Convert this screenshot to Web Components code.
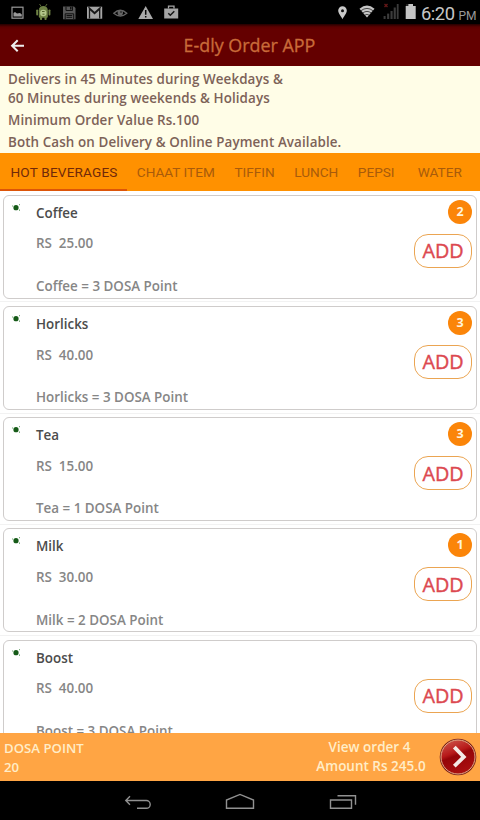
<!DOCTYPE html>
<html lang="en">
<head>
<meta charset="utf-8">
<title>E-dly Order APP</title>
<style>
html,body{margin:0;padding:0;width:480px;height:820px;overflow:hidden;background:#fff}
body{font-family:"Open Sans","Noto Sans",sans-serif}
</style>
</head>
<body>
<edly-app></edly-app>
<script>
function define(name, html, setup) {
  const template = document.createElement('template');
  template.innerHTML = html;
  customElements.define(name, class extends HTMLElement {
    connectedCallback() {
      if (this.shadowRoot) return;
      const root = this.attachShadow({ mode: 'open' });
      root.append(template.content.cloneNode(true));
      if (setup) setup(this, root);
    }
  });
}

define('status-bar', `
<style>
:host{display:flex;height:24px;background:#000;font-family:Roboto,sans-serif;color:#c6c6c6;justify-content:space-between}
svg{display:block;width:190px;height:24px}
.right{display:flex}
.right svg{width:97px}
.time{box-sizing:border-box;font-size:18.4px;line-height:27px;width:63px;white-space:nowrap;padding-left:4px;letter-spacing:-.5px}
small{font-size:12px;margin-left:4px;letter-spacing:0;color:#999}
</style>
<svg viewBox="0 0 190 24">
  <g fill="none" stroke="#999" stroke-width="1.2"><rect x="12" y="7.2" width="11" height="11"/></g>
  <path d="M13.5 15.5V13L15 12l2 1.6 3-.6 1.8 1.5V16.5H13.5Z" fill="#999"/>
  <g fill="#6f8345"><path d="M38.8 9.3a4.7 4.7 0 0 1 9 0Z"/><rect x="38.8" y="9" width="9" height="8.7" rx="1"/><rect x="36.2" y="9.4" width="1.9" height="6" rx=".9"/><rect x="48.5" y="9.4" width="1.9" height="6" rx=".9"/><rect x="40" y="16.5" width="2.1" height="3.5" rx=".8"/><rect x="44.5" y="16.5" width="2.1" height="3.5" rx=".8"/><path d="M39.5 4 41 6.2M47 4 45.5 6.2" stroke="#6f8345" stroke-width=".8"/></g>
  <circle cx="43.3" cy="13" r="3.2" fill="#b4c78b"/><path d="M42 11.5h2.6M42.5 14.2h2" stroke="#55652f" stroke-width="1"/>
  <path d="M63 6.5h11l1.5 1.5v11.2H63Z" fill="#575757"/><path d="M66 6.5v4h6.5v-4M65.2 19v-5.2h8.5V19M66.5 15.5h5.7M66.5 17.3h5.7" fill="none" stroke="#111" stroke-width="1"/><rect x="70" y="7" width="1.5" height="2.5" fill="#111"/>
  <rect x="87" y="6.7" width="15.2" height="12" fill="#a5a5a5"/><path d="M89.5 18.5V9l5.1 4.7L99.7 9v9.5M88.5 7.2l6.1 5.5 6.1-5.5" fill="none" stroke="#181818" stroke-width="1.3"/>
  <path d="M113.8 13.2q6.5-6 13 0q-6.5 5.6-13 0Z" fill="none" stroke="#656565" stroke-width="1.3"/><circle cx="120.3" cy="12.7" r="2.7" fill="#656565"/><circle cx="121" cy="12" r=".8" fill="#111"/>
  <path d="M145.7 6 153 19H138.3Z" fill="#a9a9a9"/><path d="M145.7 10v4.8M145.7 16v1.6" stroke="#050505" stroke-width="1.5"/>
  <path d="M164.2 8.5h14v10h-14Z" fill="#a5a5a5"/><path d="M168.5 8.5V6.2h5.5v2.3" fill="none" stroke="#a5a5a5" stroke-width="1.3"/><path d="m168.3 13.3 2 2 4-4" fill="none" stroke="#161616" stroke-width="1.5"/>
</svg>
<div class="right">
<svg viewBox="320 0 97 24">
  <path d="M342.5 19.2c-1-2.4-4.3-5.4-4.3-8.6a4.3 4.3 0 0 1 8.6 0c0 3.2-3.3 6.2-4.3 8.6Z" fill="#c9c9c9"/><circle cx="342.5" cy="10.7" r="1.5" fill="#111"/>
  <path d="M359.5 8.7q7.5-6.3 15 0L367 17.4Z" fill="#c6c6c6"/><path d="M360.8 10.8q6.2-4.8 12.4 0M362.8 13q4.2-3.2 8.4 0M364.8 15.2q2.2-1.7 4.4 0" fill="none" stroke="#111" stroke-width=".7"/>
  <g fill="#3c3c3c"><rect x="383.6" y="16" width="2" height="3"/><rect x="387.1" y="13.6" width="2.1" height="5.4"/><rect x="390.5" y="11" width="2.1" height="8"/><rect x="393.7" y="7.5" width="2.1" height="11.5"/><rect x="396.8" y="4" width="1.8" height="15"/></g>
  <path d="m384.5 4 3 3m0-3-3 3" stroke="#651818" stroke-width="1.3"/>
  <path d="M405.7 6h2.4V4h4.9v2h2.7v12.9h-10Z" fill="#c4c4c4"/><path d="M406 4h2.3v2H406Z" fill="#222"/>
</svg>
<div class="time">6:20<small>PM</small></div>
</div>`);

define('app-header', `
<style>
:host{display:grid;grid-template-columns:1fr auto 1fr;align-items:center;height:41.5px;background:linear-gradient(#220000,#5a0000 7%,#640000 14%,#640000);color:#c96b39}
svg{width:36px;height:40px;display:block}
h1{margin:1px 0 0 19px;font-size:17.9px;line-height:24px;font-weight:500;-webkit-text-stroke:.3px}
</style>
<svg viewBox="0 24 36 40"><path d="M24 44.7H12.4M17.7 39.2 12.1 44.7l5.6 5.5" fill="none" stroke="#eee" stroke-width="2"/></svg>
<h1><slot></slot></h1><span></span>`);

define('delivery-notice', `
<style>
:host{display:block;box-sizing:border-box;height:87.5px;background:#fffde7;padding:4px 8px 0;color:#7d6258;font-size:13.4px;letter-spacing:.1px;font-weight:600;line-height:19px;white-space:nowrap}
p{margin:0 0 3.2px}
</style>
<p>Delivers in 45 Minutes during Weekdays &amp;<br>60 Minutes during weekends &amp; Holidays</p>
<p>Minimum Order Value Rs.100</p>
<p>Both Cash on Delivery &amp; Online Payment Available.</p>`);

define('menu-tab', `
<style>
:host{display:block;box-sizing:border-box;height:38px;font:400 13.6px/39px Roboto,sans-serif;color:#a85b0b;white-space:nowrap;padding:0 9.8px}
:host([active]){width:127px;padding-left:10.5px;color:#70290a;letter-spacing:.17px;border-bottom:2px solid #dd5509}
:host(:last-child){padding-left:13.5px}
</style><slot></slot>`);

define('menu-tabs', `
<style>:host{display:flex;height:38px;background:#ff9100}</style><slot></slot>`);

define('menu-item', `
<style>
:host{display:block;box-sizing:border-box;height:111.3px;padding:3.5px 3px 0;border-bottom:1px solid #f2f2f2}
.card{display:grid;grid-template-columns:32px 1fr 58px;box-sizing:border-box;height:104px;border:1.5px solid #cfcccb;border-radius:6px;background:#fff;padding-right:4px}
svg{width:20px;height:24px}
.info{font-size:13.4px;font-weight:600;line-height:18px;color:#868686;white-space:pre}
h2{font-size:13.4px;line-height:18px;font-weight:600;color:#4c4c4c;margin:8px 0 12.8px}
.price{margin:0 0 24.5px}
p{margin:0}
.actions{display:flex;flex-direction:column;align-items:flex-end}
.badge{width:24px;height:24px;margin:4px 0 10px;border-radius:50%;background:#fb8509;color:#fff3dc;font-size:12.5px;font-weight:700;line-height:23px;text-align:center}
button{box-sizing:border-box;width:58px;height:34px;padding:0;border:1.5px solid #eba552;border-radius:14px;background:#fff;color:#dc4850;font:500 19.8px/31px "Open Sans",sans-serif;-webkit-text-stroke:.4px}
:host(:not([count])) .badge{visibility:hidden}
</style>
<div class="card">
<svg viewBox="0 0 20 24"><ellipse cx="12" cy="11.7" rx="2.6" ry="2.6" fill="#155a17"/><path d="M15.5 8.2v1M15.5 13.5v1.3M8.6 9.5v1" stroke="#63a065" stroke-width="1"/></svg>
<div class="info"><h2></h2><p class="price"></p><p class="points"></p></div>
<div class="actions"><span class="badge"></span><button type="button">ADD</button></div>
</div>`, (host, root) => {
  const name = host.getAttribute('name');
  root.querySelector('h2').textContent = name;
  root.querySelector('.price').textContent = 'RS  ' + host.getAttribute('price');
  root.querySelector('.points').textContent = name + ' = ' + host.getAttribute('points') + ' DOSA Point';
  root.querySelector('.badge').textContent = host.getAttribute('count') || '';
});

define('order-bar', `
<style>
:host{display:flex;box-sizing:border-box;height:47.7px;background:#ffa544;color:#ffedc8;font-size:13.2px;font-weight:600;line-height:18.5px;padding:6px 3px 0 4px}
.total{margin-left:auto;width:112px;text-align:center;margin-top:-1px;font-size:13.5px}
.total div{white-space:nowrap}
.total .view{padding-right:3px}
svg{width:38px;height:38px;margin:-1px 0 0 12px}
</style>
<div>DOSA POINT<br>20</div>
<div class="total"><div class="view">View order 4</div><div>Amount Rs 245.0</div></div>
<svg viewBox="0 0 38 38"><defs><linearGradient id="g" x1="0" y1="0" x2=".4" y2="1"><stop stop-color="#d16055"/><stop offset=".45" stop-color="#b71919"/><stop offset=".55" stop-color="#950508"/><stop offset="1" stop-color="#a80e10"/></linearGradient></defs><circle cx="19" cy="19" r="18.3" fill="#7b2018"/><circle cx="19" cy="19" r="17" fill="url(#g)" stroke="#e2aa87" stroke-width="1"/><path d="m15.3 9.2 9.5 9.7-9.5 9.3" fill="none" stroke="#f4e9e5" stroke-width="3.8"/></svg>`);

define('system-nav', `
<style>:host{display:block;height:39px;background:#000}svg{display:block}</style>
<svg width="480" height="39" viewBox="0 781 480 39" fill="none" stroke="#919191" stroke-width="1.4">
<path d="M130 796.3 125.8 800.5l4.2 4.2M126 800.5h20.3a3.8 3.8 0 0 1 0 7.8H137"/>
<path d="M226.5 808.3V800l13.5-5.6 13.5 5.6v8.3Z"/>
<path d="M330.5 800h21v8.3h-21ZM337.5 795.8h18v9"/>
</svg>`);

define('edly-app', `
<style>
:host{display:flex;flex-direction:column;width:480px;height:820px;overflow:hidden}
:host>*{flex-shrink:0}
.list{flex:1 1 0;min-height:0;overflow:hidden;background:#fff}
</style>
<status-bar></status-bar>
<app-header>E-dly Order APP</app-header>
<delivery-notice></delivery-notice>
<menu-tabs><menu-tab active>HOT BEVERAGES</menu-tab><menu-tab>CHAAT ITEM</menu-tab><menu-tab>TIFFIN</menu-tab><menu-tab>LUNCH</menu-tab><menu-tab>PEPSI</menu-tab><menu-tab>WATER</menu-tab></menu-tabs>
<div class="list">
<menu-item name="Coffee" price="25.00" points="3" count="2"></menu-item>
<menu-item name="Horlicks" price="40.00" points="3" count="3"></menu-item>
<menu-item name="Tea" price="15.00" points="1" count="3"></menu-item>
<menu-item name="Milk" price="30.00" points="2" count="1"></menu-item>
<menu-item name="Boost" price="40.00" points="3"></menu-item>
</div>
<order-bar></order-bar>
<system-nav></system-nav>`);
</script>
</body>
</html>
